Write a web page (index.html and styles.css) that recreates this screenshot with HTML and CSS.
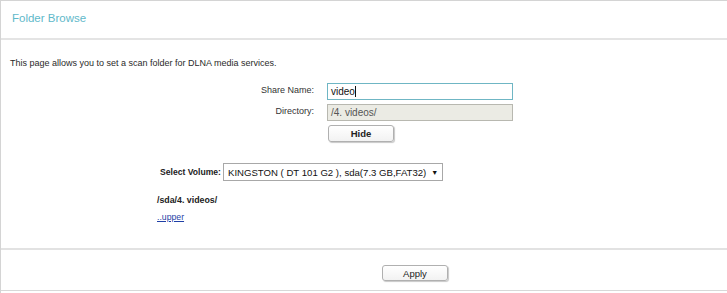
FILE: index.html
```html
<!DOCTYPE html>
<html>
<head>
<meta charset="utf-8">
<title>Folder Browse</title>
<link rel="stylesheet" href="styles.css">
</head>
<body>
<div class="panel">
  <div class="header"><h1 class="title">Folder Browse</h1></div>
  <div class="content">
    <p class="desc">This page allows you to set a scan folder for DLNA media services.</p>
    <div class="form">
      <label class="label">Share Name:</label>
      <div class="field"><span class="input focus">video<span class="caret"></span></span></div>
      <label class="label">Directory:</label>
      <div class="field"><span class="input disabled">/4. videos/</span></div>
      <span></span>
      <div class="field"><button class="btn hide-btn">Hide</button></div>
    </div>
    <div class="volume">
      <span class="vol-label">Select Volume:</span>
      <span class="select"><span class="sel-text">KINGSTON ( DT 101 G2 ), sda(7.3 GB,FAT32)</span><span class="arrow">&#9660;</span></span>
    </div>
    <div class="browse">
      <div class="path">/sda/4. videos/</div>
      <a class="upper" href="#">..upper</a>
    </div>
  </div>
  <div class="footer">
    <button class="btn apply-btn">Apply</button>
  </div>
</div>
</body>
</html>
```

FILE: styles.css
```css
html, body {
  margin: 0;
  padding: 0;
  background: #fff;
}
body {
  font-family: "Liberation Sans", Arial, sans-serif;
  color: #333;
  font-size: 9px;
}
.panel {
  height: 293px;
  box-sizing: border-box;
  border-left: 1px solid #d4d4d4;
  border-top: 1px solid #d4d4d4;
  display: flex;
  flex-direction: column;
}
.header {
  height: 39px;
  flex: none;
  box-sizing: border-box;
  border-bottom: 2px solid #e4e4e4;
  display: flex;
  align-items: center;
  padding-left: 11px;
}
.title {
  margin: 0;
  font-size: 11.5px;
  font-weight: normal;
  color: #5fb9ca;
  padding-bottom: 4px;
}
.content {
  padding: 17px 0 0 9px;
  height: 210px;
  flex: none;
  box-sizing: border-box;
  border-bottom: 2px solid #e2e2e2;
}
.desc {
  margin: 0;
  line-height: 13px;
  font-size: 9px;
  color: #2a2a2a;
}
.form {
  display: grid;
  grid-template-columns: 304px 186px;
  column-gap: 13px;
  row-gap: 4px;
  margin-top: 13px;
}
.label {
  text-align: right;
  line-height: 14px;
  font-size: 9px;
  color: #333;
}
.field {
  display: flex;
}
.input {
  width: 186px;
  height: 17px;
  box-sizing: border-box;
  border: 1px solid #b8b8b0;
  padding: 0 3px;
  font-size: 10px;
  line-height: 15px;
  display: flex;
  align-items: center;
}
.input.focus {
  border-color: #6fb6c4;
  color: #111;
}
.caret {
  display: inline-block;
  width: 1px;
  height: 11px;
  background: #111;
}
.input.disabled {
  background: #ebebe4;
  color: #555;
}
.btn {
  font-family: "Liberation Sans", Arial, sans-serif;
  background: linear-gradient(#ffffff, #f2f2f2);
  border: 1px solid #b0b0b0;
  border-radius: 3px;
  box-shadow: 1px 1px 1px #c8c8c8;
  height: 17px;
  width: 66px;
  padding: 0;
  font-size: 9.5px;
  color: #222;
  line-height: 15px;
}
.hide-btn {
  margin-left: 1px;
  font-weight: bold;
}
.volume {
  display: flex;
  align-items: center;
  margin-top: 21px;
  padding-left: 150px;
  gap: 2px;
}
.vol-label {
  font-weight: bold;
  font-size: 8.6px;
  color: #222;
}
.select {
  width: 220px;
  height: 18px;
  box-sizing: border-box;
  border: 1px solid #a8a8a8;
  padding: 0 0 0 4px;
  font-size: 9.6px;
  color: #111;
  display: flex;
  align-items: center;
  white-space: nowrap;
}
.arrow {
  font-size: 7px;
  margin-left: 5px;
}
.browse {
  padding-left: 147px;
  margin-top: 13px;
}
.path {
  font-weight: bold;
  font-size: 8.8px;
  line-height: 13px;
  color: #222;
}
.upper {
  display: inline-block;
  margin-top: 4px;
  color: #1f3fa6;
  line-height: 13px;
  font-size: 8.7px;
}
.footer {
  height: 41px;
  flex: none;
  box-sizing: border-box;
  border-bottom: 1px solid #d8d8d8;
  display: flex;
  justify-content: center;
  padding-top: 15px;
  padding-left: 102px;
}
.apply-btn {
  width: 66px;
  height: 16px;
}
```
